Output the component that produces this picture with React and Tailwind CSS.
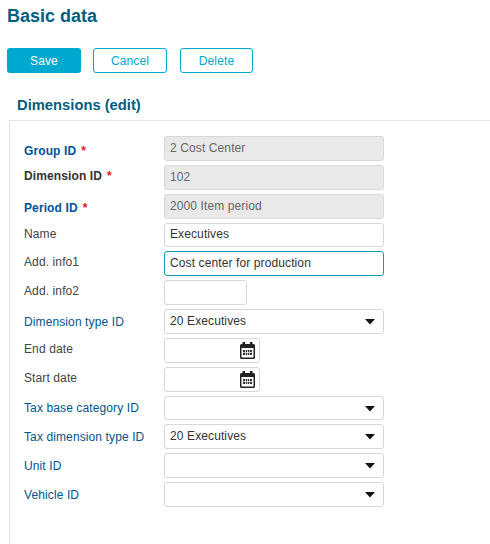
const inputBase = 'h-[24.85px] rounded-[3px] border px-[5px] pb-[1px] flex items-center text-[12px] text-[#333]';
const idleBorder = 'border-[#d8d8d8]';

function CalendarIcon() {
  return (
    <svg width="15" height="17" viewBox="0 0 15 17" className="absolute right-[4px] top-[3px]">
      <rect x="2.5" y="0" width="2.5" height="4" fill="#222" />
      <rect x="10" y="0" width="2.5" height="4" fill="#222" />
      <path d="M1.5 2h12a1.5 1.5 0 0 1 1.5 1.5v12a1.5 1.5 0 0 1-1.5 1.5h-12A1.5 1.5 0 0 1 0 15.5v-12A1.5 1.5 0 0 1 1.5 2z" fill="#222" />
      <rect x="1.5" y="6" width="12" height="9.5" fill="#fff" />
      <rect x="3" y="8" width="9" height="5" fill="#333" />
      <rect x="3" y="10.2" width="9" height="0.7" fill="#fff" />
      <rect x="5.1" y="8" width="0.7" height="5" fill="#fff" />
      <rect x="7.2" y="8" width="0.7" height="5" fill="#fff" />
      <rect x="9.3" y="8" width="0.7" height="5" fill="#fff" />
    </svg>
  );
}

function Field({ row }) {
  if (row.type === 'readonly') {
    return <div className={`${inputBase} ${idleBorder} w-[220px] bg-[#e9e9e9] text-[#666]`}>{row.value}</div>;
  }
  if (row.type === 'select') {
    return (
      <div className={`${inputBase} ${idleBorder} w-[220px] justify-between bg-white`}>
        <span>{row.value}</span>
        <svg width="10" height="6" viewBox="0 0 10 6" className="mr-[3px] mt-[2px]">
          <path d="M0 0h10L5 5.6z" fill="#111" />
        </svg>
      </div>
    );
  }
  if (row.type === 'date') {
    return <div className={`${inputBase} ${idleBorder} relative w-[96px] bg-white`}><CalendarIcon /></div>;
  }
  if (row.type === 'short') {
    return <div className={`${inputBase} ${idleBorder} w-[83px] bg-white`} />;
  }
  return (
    <div className={`${inputBase} ${row.focus ? 'border-[#0e9ab8]' : idleBorder} w-[220px] bg-white`}>{row.value}</div>
  );
}

const blueBold = 'text-[#00529b] font-bold';
const blue = 'text-[#00558f]';
const dark = 'text-[#444]';

const rows = [
  { label: 'Group ID', color: `${blueBold} pt-[6px]`, required: true, type: 'readonly', value: '2 Cost Center' },
  { label: 'Dimension ID', color: 'text-[#333] font-bold pb-[3px]', required: true, type: 'readonly', value: '102' },
  { label: 'Period ID', color: `${blueBold} pt-[3px]`, required: true, type: 'readonly', value: '2000 Item period' },
  { label: 'Name', color: `${dark} pb-[2px]`, type: 'text', value: 'Executives' },
  { label: 'Add. info1', color: `${dark} pb-[3px]`, type: 'text', value: 'Cost center for production', focus: true },
  { label: 'Add. info2', color: `${dark} pb-[3px]`, type: 'short' },
  { label: 'Dimension type ID', color: `${blue} pt-[1px]`, type: 'select', value: '20 Executives' },
  { label: 'End date', color: `${dark} pb-[3px]`, type: 'date' },
  { label: 'Start date', color: `${dark} pb-[2px]`, type: 'date' },
  { label: 'Tax base category ID', color: blue, type: 'select', value: '' },
  { label: 'Tax dimension type ID', color: `${blue} pt-[1px]`, type: 'select', value: '20 Executives' },
  { label: 'Unit ID', color: `${blue} pt-[1px]`, type: 'select', value: '' },
  { label: 'Vehicle ID', color: `${blue} pt-[1px]`, type: 'select', value: '' },
];

export default function App() {
  return (
    <div className="h-[544px] w-[490px] overflow-hidden bg-white font-['Liberation_Sans',Arial,sans-serif] tracking-[0.11px]">
      {/* Page title */}
      <h1 className="pl-[7px] pt-[6px] text-[18px] leading-[20px] font-bold tracking-normal text-[#005e80]">Basic data</h1>

      {/* Actions */}
      <div className="mt-[22px] flex pl-[7px] text-[12px]">
        <button className="h-[25px] w-[74px] rounded-[3px] bg-[#00a9cf] text-white">Save</button>
        <button className="ml-[12px] h-[25px] w-[74px] rounded-[3px] border border-[#00a9cf] bg-white text-[#00a9cf]">Cancel</button>
        <button className="ml-[13px] h-[25px] w-[73px] rounded-[3px] border border-[#00a9cf] bg-white text-[#00a9cf]">Delete</button>
      </div>

      <h2 className="mt-[23px] pl-[17px] text-[14.75px] leading-[18px] font-bold tracking-normal text-[#005e80]">Dimensions (edit)</h2>

      {/* Form panel */}
      <div className="mt-[6px] ml-[9px] h-[500px] border-t border-l border-[#e4e4e4] pt-[15px] pl-[14px]">
        <div className="flex flex-col gap-[4px]">
          {rows.map((row) => (
            <div key={row.label} className="flex items-center">
              <div className={`w-[140px] text-[12px] leading-[14px] ${row.color}`}>
                {row.label}
                {row.required && <span className="ml-[5px] text-[#e8141c]">*</span>}
              </div>
              <Field row={row} />
            </div>
          ))}
        </div>
      </div>
    </div>
  );
}
